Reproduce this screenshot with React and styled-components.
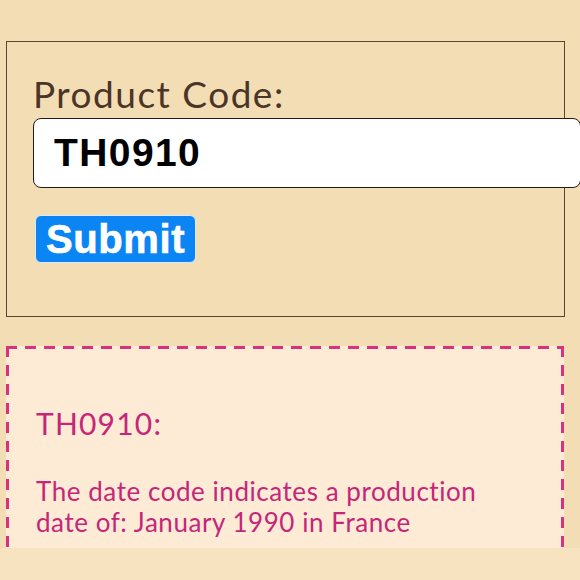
import React from "react";
import styled, { createGlobalStyle } from "styled-components";

const Global = createGlobalStyle`
  html, body { margin: 0; padding: 0; background: #f8e3c0; }
  body { font-family: Lato, "Noto Sans", sans-serif; }
`;

const Viewport = styled.div`
  width: 580px;
  height: 548px;
  overflow: hidden;
  background: #f3ddb4;
  box-sizing: border-box;
  padding: 41px 0 0 6px;
  display: flex;
  flex-direction: column;
`;

const FormBox = styled.form`
  width: 559px;
  height: 276px;
  flex: none;
  box-sizing: border-box;
  border: 1.5px solid #5a4331;
  padding: 30px 0 0 26px;
  display: flex;
  flex-direction: column;
  align-items: flex-start;
`;

const Label = styled.label`
  font-family: Lato, sans-serif;
  font-size: 37px;
  line-height: 44px;
  letter-spacing: 1.5px;
  color: #4b3526;
  margin-bottom: 2px;
`;

const Input = styled.input`
  width: 548px;
  height: 70px;
  flex: none;
  box-sizing: border-box;
  border: 1.5px solid #231c16;
  border-radius: 8px;
  background: #fff;
  padding: 0 0 0 20px;
  font-family: "Liberation Sans", Arial, sans-serif;
  font-weight: 700;
  font-size: 39px;
  letter-spacing: 1.4px;
  color: #000;
  outline: none;
`;

const SubmitButton = styled.button`
  margin-top: 27px;
  margin-left: 2px;
  width: 161px;
  height: 48px;
  box-sizing: border-box;
  border: 1px solid #d7ebff;
  border-radius: 6px;
  background: #0b84f4;
  color: #fff;
  font-family: "Liberation Sans", Arial, sans-serif;
  font-weight: 700;
  font-size: 40px;
  letter-spacing: 0.6px;
  -webkit-text-stroke: 0.6px #fff;
  padding: 0;
  display: flex;
  align-items: center;
  justify-content: center;
`;

const dash = "#d8327e";

const ResultBox = styled.section`
  margin-top: 29px;
  width: 558px;
  flex: none;
  box-sizing: border-box;
  background-color: #fdebd5;
  background-image:
    repeating-linear-gradient(to right, ${dash} 0 11px, transparent 11px 19px),
    repeating-linear-gradient(to bottom, ${dash} 0 11px, transparent 11px 19px),
    repeating-linear-gradient(to bottom, ${dash} 0 11px, transparent 11px 19px),
    repeating-linear-gradient(to right, ${dash} 0 11px, transparent 11px 19px);
  background-size: 100% 3px, 3px 100%, 3px 100%, 100% 3px;
  background-position: 0 0, 0 0, 100% 0, 0 100%;
  background-repeat: no-repeat;
  padding: 59px 26px 40px 30px;
  color: #c5267a;
`;

const ResultTitle = styled.h2`
  margin: 0 0 35px;
  font-family: Lato, sans-serif;
  font-weight: 400;
  font-size: 30px;
  line-height: 36px;
  letter-spacing: 1.2px;
`;

const ResultText = styled.p`
  margin: 0;
  font-family: Lato, sans-serif;
  font-size: 26px;
  line-height: 31px;
  letter-spacing: 0.55px;
  max-width: 490px;
`;

export default function App() {
  return (
    <>
      <Global />
      <Viewport>
        <FormBox onSubmit={(e) => e.preventDefault()}>
          <Label htmlFor="code">Product Code:</Label>
          <Input id="code" defaultValue="TH0910" />
          <SubmitButton type="submit">Submit</SubmitButton>
        </FormBox>
        <ResultBox>
          <ResultTitle>TH0910:</ResultTitle>
          <ResultText>
            The date code indicates a production date of: January 1990 in France
          </ResultText>
        </ResultBox>
      </Viewport>
    </>
  );
}
